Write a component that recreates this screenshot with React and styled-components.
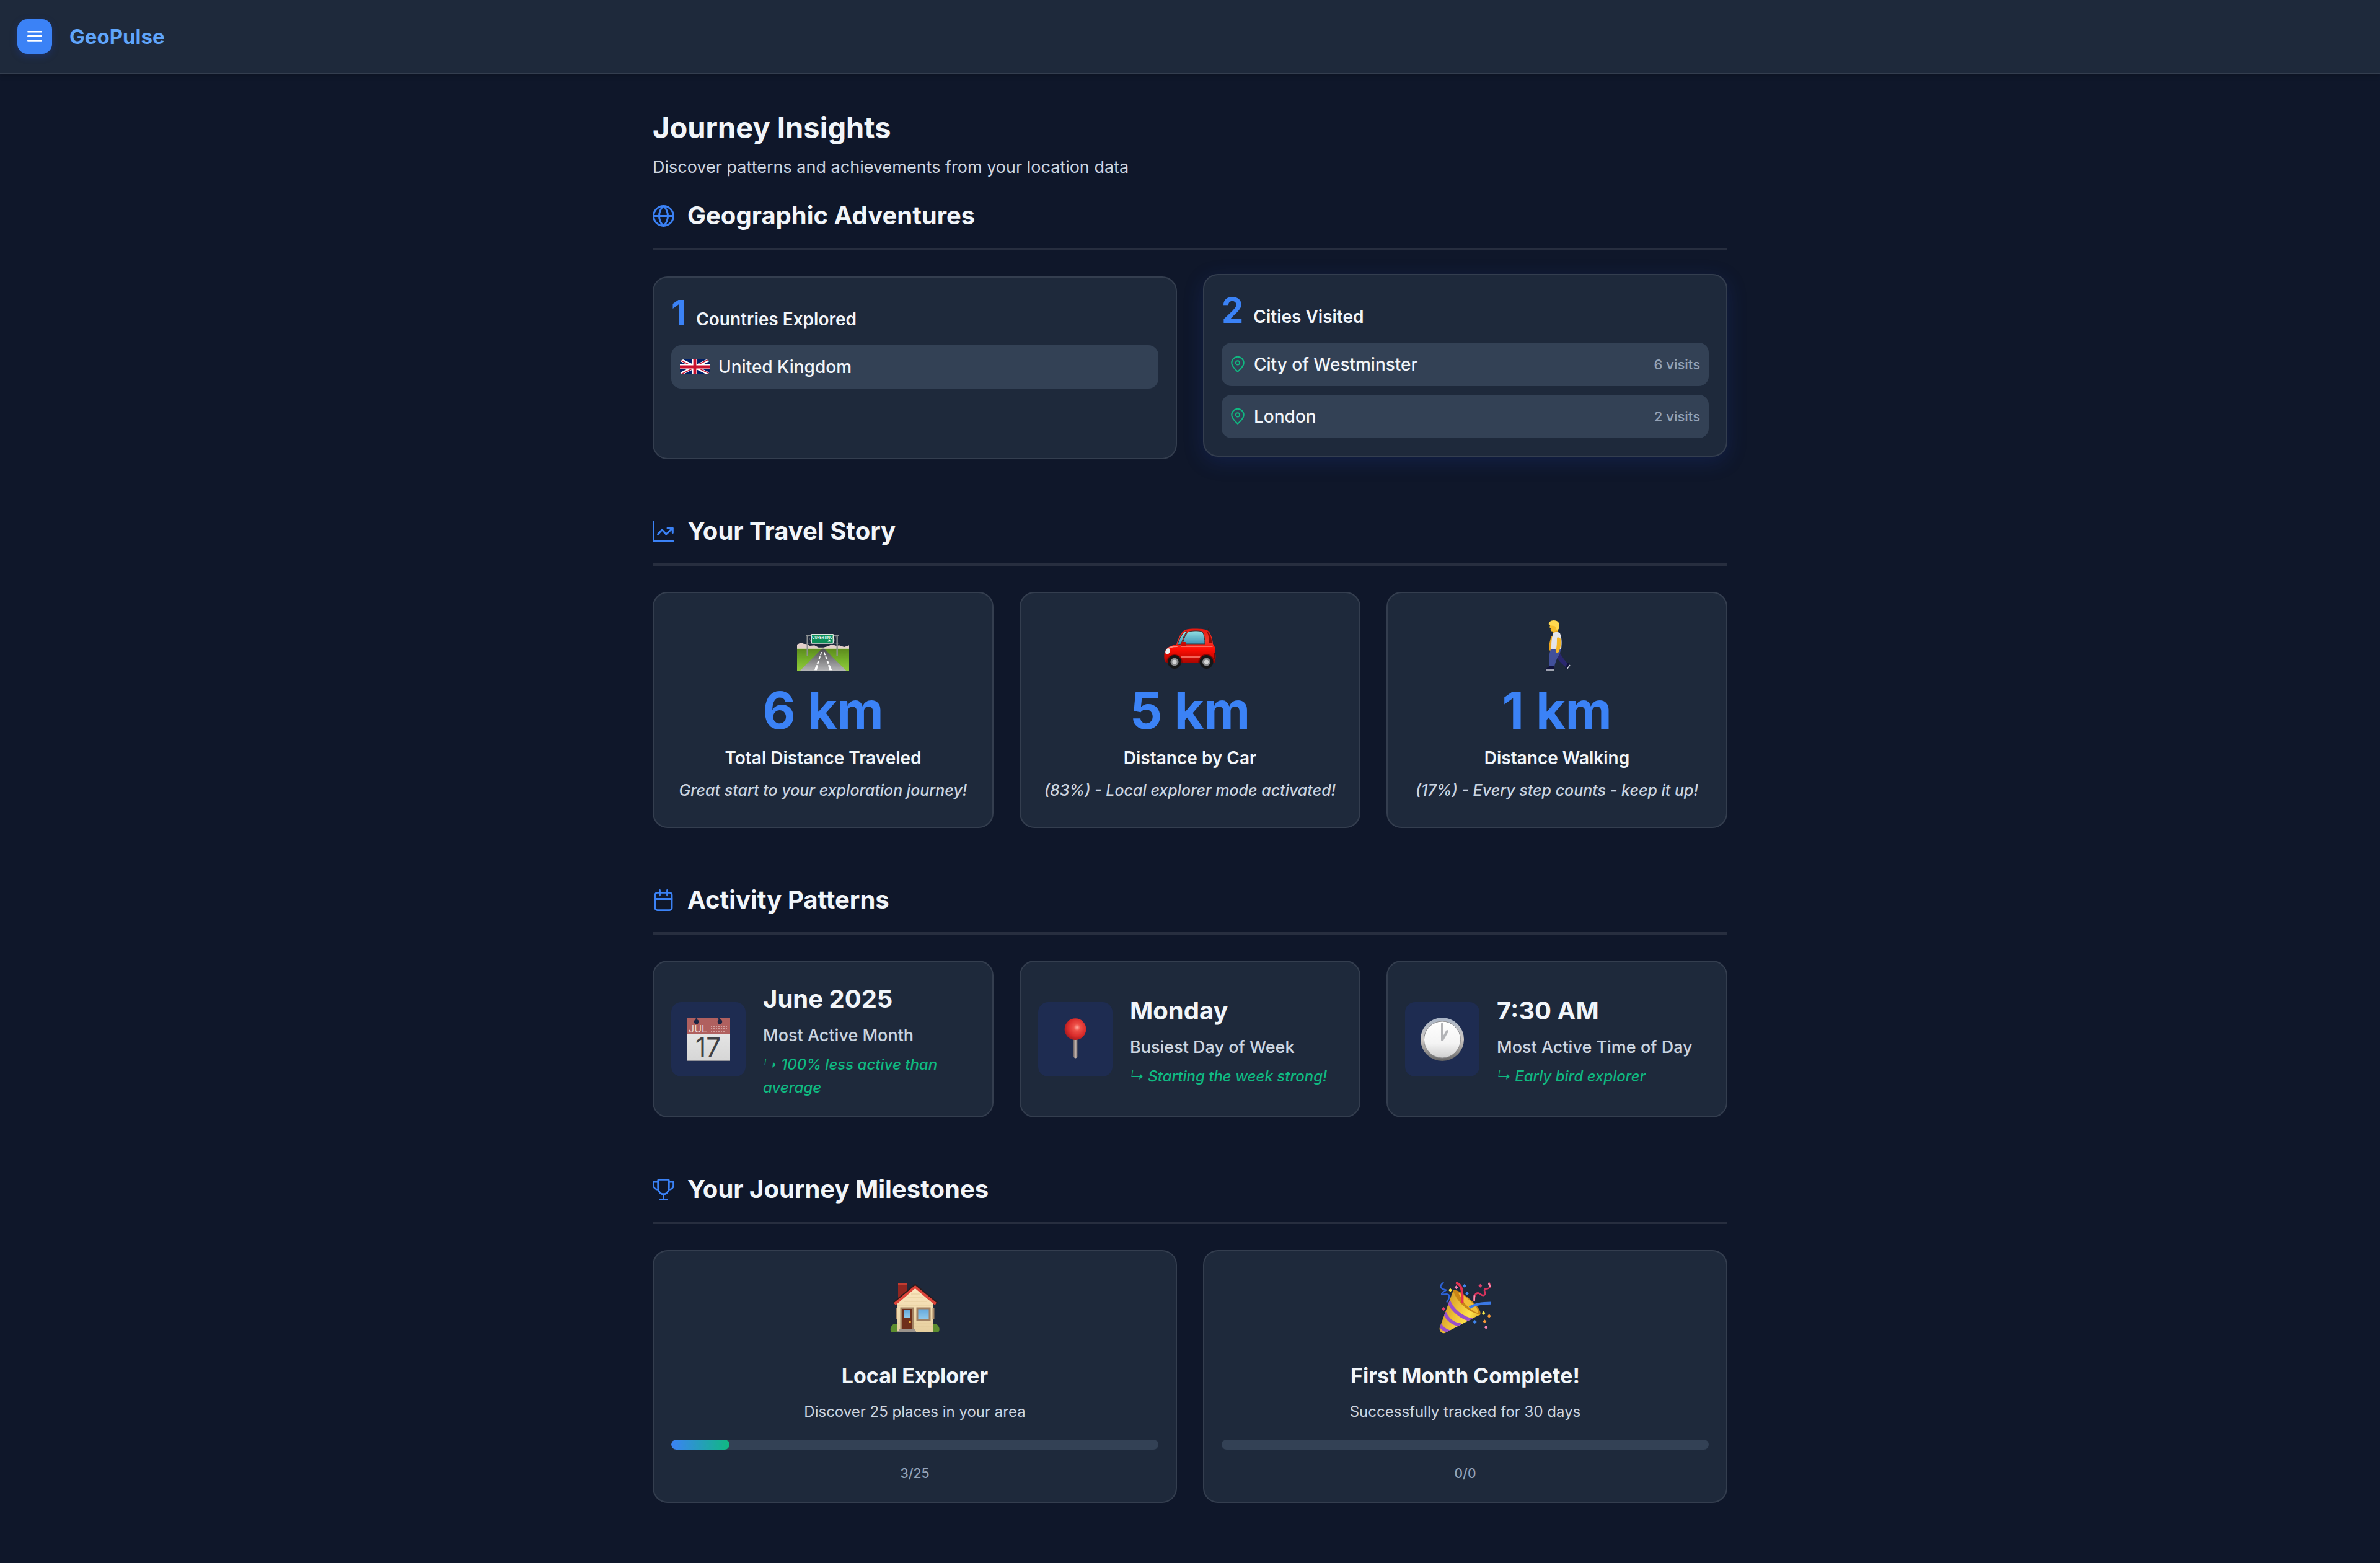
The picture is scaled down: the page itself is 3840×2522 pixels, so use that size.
import React from "react";
import styled, { createGlobalStyle, css } from "styled-components";

const color = {
  page: "#0f172a",
  surface: "#1e293b",
  row: "#334155",
  line: "rgba(255, 255, 255, 0.1)",
  text: "#f1f5f9",
  soft: "#cbd5e1",
  muted: "#94a3b8",
  blue: "#3b82f6",
  sky: "#60a5fa",
  green: "#10b981",
};

const GlobalStyle = createGlobalStyle`
  *, *::before, *::after { box-sizing: border-box; }
  body {
    margin: 0;
    background: ${color.page};
    color: ${color.text};
    font-family: Inter, "Liberation Sans", sans-serif;
    font-size: 28px;
    line-height: 42px;
  }
  h1, h2, h3, p, ul { margin: 0; padding: 0; }
`;

/* ---------- layout ---------- */

const Header = styled.header`
  display: flex;
  align-items: center;
  gap: 28px;
  padding: 31px 28px;
  background: ${color.surface};
  border-bottom: 2px solid ${color.line};
  box-shadow: 0 2px 8px rgba(0, 0, 0, 0.2);
`;

const MenuButton = styled.button`
  display: flex;
  align-items: center;
  justify-content: center;
  width: 56px;
  height: 56px;
  padding: 0;
  border: 0;
  border-radius: 16px;
  background: ${color.blue};
  color: #fff;
  box-shadow: 0 4px 12px rgba(30, 64, 175, 0.35);
  cursor: pointer;
`;

const Logo = styled.a`
  font-size: 33px;
  font-weight: 700;
  color: ${color.sky};
  text-decoration: none;
`;

const Main = styled.main`
  width: min(1734px, 100% - 56px);
  margin: 0 auto;
  padding: 56px 0 96px;
`;

const PageTitle = styled.h1`
  font-size: 47px;
  line-height: 60px;
  font-weight: 700;
`;

const PageSubtitle = styled.p`
  margin-top: 13px;
  font-size: 27px;
  color: ${color.soft};
`;

const Section = styled.section`
  margin-top: 90px;

  ${PageSubtitle} + & {
    margin-top: 31px;
  }
`;

const SectionHeader = styled.div`
  display: flex;
  align-items: center;
  gap: 21px;
  padding-bottom: 26px;
  margin-bottom: 42px;
  border-bottom: 4px solid ${color.line};
  color: ${color.blue};
`;

const SectionTitle = styled.h2`
  font-size: 40px;
  line-height: 52px;
  font-weight: 700;
  color: ${color.text};
`;

const Grid = styled.div`
  display: grid;
  grid-template-columns: repeat(${(p) => p.$columns}, minmax(0, 1fr));
  gap: 42px;

  @media (max-width: 1400px) {
    grid-template-columns: minmax(0, 1fr);
  }
`;

const Card = styled.article`
  padding: 28px;
  border: 2px solid ${color.line};
  border-radius: 24px;
  background: ${color.surface};

  ${(p) =>
    p.$raised &&
    css`
      transform: translateY(-4px);
      box-shadow: 0 8px 32px rgba(30, 64, 175, 0.22);
    `}
`;

/* ---------- geographic cards ---------- */

const CountRow = styled.div`
  display: flex;
  align-items: baseline;
  gap: 16px;
  margin-bottom: 21px;
`;

const Count = styled.span`
  font-size: 56px;
  line-height: 58px;
  font-weight: 700;
  color: ${color.blue};
`;

const CardLabel = styled.h3`
  font-size: 28px;
  line-height: 42px;
  font-weight: 600;
`;

const PlaceList = styled.ul`
  display: flex;
  flex-direction: column;
  gap: 14px;
  list-style: none;
`;

const Place = styled.li`
  display: flex;
  align-items: center;
  gap: 14px;
  padding: 14px;
  border-radius: 16px;
  background: ${color.row};
  color: ${color.green};
`;

const PlaceName = styled.span`
  flex: 1;
  font-weight: 500;
  color: ${color.text};
`;

const Visits = styled.span`
  font-size: 22px;
  font-weight: 500;
  color: ${color.muted};
`;

/* ---------- travel cards ---------- */

const TravelCard = styled(Card)`
  display: flex;
  flex-direction: column;
  align-items: center;
  padding: 42px 28px 40px;
  text-align: center;
`;

const Distance = styled.div`
  margin: 22px 0 14px;
  font-size: 82px;
  line-height: 84px;
  font-weight: 700;
  color: ${color.blue};
`;

const TravelLabel = styled(CardLabel)`
  line-height: 40px;
`;

const TravelNote = styled.p`
  margin-top: 14px;
  font-size: 25px;
  line-height: 37px;
  font-weight: 500;
  font-style: italic;
  color: ${color.soft};
`;

/* ---------- activity cards ---------- */

const ActivityCard = styled(Card)`
  display: flex;
  align-items: center;
  gap: 28px;
`;

const IconTile = styled.div`
  display: flex;
  flex: none;
  align-items: center;
  justify-content: center;
  width: 120px;
  height: 120px;
  border-radius: 16px;
  background: #1e2c51;
`;

const ActivityValue = styled.h3`
  font-size: 40px;
  line-height: 63px;
  font-weight: 700;
`;

const ActivityLabel = styled.p`
  margin: 7px 0;
  font-size: 27px;
  font-weight: 500;
  color: ${color.soft};
`;

const ActivityNote = styled.p`
  font-size: 24px;
  line-height: 37px;
  font-weight: 500;
  font-style: italic;
  color: ${color.green};
`;

const Arrow = styled.span`
  font-weight: 200;
`;

/* ---------- milestone cards ---------- */

const MilestoneCard = styled(Card)`
  text-align: center;
`;

const EmojiStage = styled.div`
  display: flex;
  align-items: center;
  justify-content: center;
  height: 126px;
`;

const MilestoneTitle = styled.h3`
  margin-top: 21px;
  font-size: 34px;
  line-height: 52px;
  font-weight: 700;
`;

const MilestoneText = styled.p`
  margin: 14px 0 27px;
  font-size: 24px;
  line-height: 36px;
  color: ${color.soft};
`;

const Track = styled.div`
  height: 16px;
  border-radius: 8px;
  background: ${color.row};
  overflow: hidden;
`;

const Fill = styled.div`
  height: 100%;
  border-radius: 8px;
  background: linear-gradient(90deg, ${color.blue}, ${color.green});
`;

const Progress = styled.p`
  margin-top: 21px;
  font-size: 21px;
  line-height: 35px;
  font-weight: 500;
  color: ${color.muted};
`;

/* ---------- line icons ---------- */

const LineSvg = styled.svg`
  display: block;
  flex: none;
  fill: none;
  stroke: currentColor;
  stroke-linecap: round;
  stroke-linejoin: round;
`;

const MenuIcon = () => (
  <LineSvg width="24" height="24" viewBox="0 0 24 24" strokeWidth="2.6" aria-hidden="true">
    <path d="M1.3 4.2h21.4M1.3 11.4h21.4M1.3 18.4h21.4" />
  </LineSvg>
);

const GlobeIcon = () => (
  <LineSvg width="35" height="35" viewBox="0 0 35 35" strokeWidth="3" aria-hidden="true">
    <circle cx="17.5" cy="17.5" r="16" />
    <path d="M1.5 17.5h32" />
    <path d="M17.5 1.5c-4.6 4.2-7 10-7 16s2.4 11.800 7 16c4.6-4.200 7-10 7-16s-2.400-11.800-7-16z" />
  </LineSvg>
);

const ChartIcon = () => (
  <LineSvg width="35" height="35" viewBox="0 0 35 35" strokeWidth="3" aria-hidden="true">
    <path d="M1.5 1.5v32h32" />
    <path d="M8.5 22l6.700-7.200 6.600 7.200 10-9.500" />
    <path d="M24 12h8.300v7.400" />
  </LineSvg>
);

const CalendarIcon = () => (
  <LineSvg width="35" height="35" viewBox="0 0 35 35" strokeWidth="2.8" aria-hidden="true">
    <rect x="4" y="5.4" width="27" height="28.2" rx="3.600" />
    <path d="M4 15.5h27M11.5 1.4v8.400M23.5 1.4v8.400" />
  </LineSvg>
);

const TrophyIcon = () => (
  <LineSvg width="35" height="35" viewBox="0 0 35 35" strokeWidth="2.8" aria-hidden="true">
    <path d="M8.700 3a1.700 1.700 0 0 1 1.700-1.600h14.200A1.700 1.700 0 0 1 26.300 3v11.500c0 6-4 10.500-8.800 10.500s-8.800-4.500-8.800-10.500z" />
    <path d="M8.700 5H3a1.700 1.700 0 0 0-1.600 1.700v3.800c0 4 3.200 7 8 7.200M26.300 5H32a1.700 1.700 0 0 1 1.600 1.700v3.800c0 4-3.200 7-8 7.200" />
    <path d="M17.500 25v8.500M11.500 33.500h12" />
  </LineSvg>
);

const PinIcon = () => (
  <LineSvg width="24" height="26" viewBox="0 0 24 26" strokeWidth="2" aria-hidden="true">
    <path d="M12 24.800C6 19.500 2.200 15.500 2.200 10.600a9.800 9.800 0 0 1 19.600 0c0 4.900-3.800 8.900-9.800 14.200z" />
    <circle cx="12" cy="10.400" r="3.200" />
  </LineSvg>
);

/* ---------- colour pictures ---------- */

const Picture = styled.svg`
  display: block;
  flex: none;
  overflow: visible;
`;

const Flag = styled.svg`
  display: block;
  flex: none;
  border-radius: 6px;
`;

const UkFlag = () => (
  <Flag width="48" height="24" viewBox="0 0 60 30" role="img" aria-label="Flag of the United Kingdom">
    <clipPath id="saltire">
      <path d="M30 15h30v15zv15H0zH0V0zV0h30z" />
    </clipPath>
    <path d="M0 0v30h60V0z" fill="#012169" />
    <path d="M0 0l60 30M60 0L0 30" stroke="#fff" strokeWidth="6" />
    <path d="M0 0l60 30M60 0L0 30" clipPath="url(#saltire)" stroke="#c8102e" strokeWidth="4" />
    <path d="M30 0v30M0 15h60" stroke="#fff" strokeWidth="10" />
    <path d="M30 0v30M0 15h60" stroke="#c8102e" strokeWidth="6" />
  </Flag>
);

const RoadPicture = () => (
  <Picture width="84" height="84" viewBox="18 -3 252 252" aria-hidden="true">
    <defs>
      <linearGradient id="grass" x1="0" y1="0" x2="0" y2="1">
        <stop offset="0" stopColor="#5c8a1c" />
        <stop offset="0.5" stopColor="#74b02a" />
        <stop offset="1" stopColor="#92cb3c" />
      </linearGradient>
      <linearGradient id="asphalt" x1="0" y1="0" x2="0" y2="1">
        <stop offset="0" stopColor="#4c4c4e" />
        <stop offset="1" stopColor="#b4b4b6" />
      </linearGradient>
    </defs>
    <path d="M18 140v-20l20-10 12 6 14 2 16 8 22-2 20 10h24l22-6 18-9 22 7 14-2 24 8 24-8v18z" fill="#e3cfca" />
    <path d="M18 136h252v6H18z" fill="#efe9d8" />
    <path d="M18 140h252v106H18z" fill="url(#grass)" />
    <path d="M138 140h11l107 106H33z" fill="url(#asphalt)" />
    <path d="M134 156h4l-3 16h-6zM126 178h6l-4 13h-7zM119 198h8l-5 14h-9zM110 220h10l-6 24h-12z" fill="#fff" />
    <path d="M147 156h4l6 16h-6zM154 178h6l5 13h-7zM160 198h8l6 14h-9zM168 220h9l10 24h-13z" fill="#fff" />
    <path d="M68 72v104M212 72v104" stroke="#8e9193" strokeWidth="7" />
    <path d="M60 76h26M195 76h27M60 113h26M195 113h27" stroke="#8d9193" strokeWidth="4" />
    <path d="M74 78l12 32M206 78l-10 32" stroke="#74797b" strokeWidth="2" />
    <rect x="86" y="69" width="109" height="47" rx="4" fill="#dfe8e2" />
    <rect x="90" y="73" width="101" height="39" rx="3" fill="#0d8f58" />
    <text x="140.5" y="92" textAnchor="middle" fontFamily="Inter, sans-serif" fontWeight="600" fontSize="17" fill="#fff">CUPERTINO</text>
    <path d="M168 107l7-8M168 97h9v9z" stroke="#fff" strokeWidth="3" fill="#fff" />
  </Picture>
);

const CarPicture = () => (
  <Picture width="84" height="84" viewBox="0 0 84 84" aria-hidden="true">
    <defs>
      <linearGradient id="carBody" x1="0" y1="0" x2="0" y2="1">
        <stop offset="0" stopColor="#e8170e" />
        <stop offset="0.35" stopColor="#f23a2c" />
        <stop offset="0.6" stopColor="#ff0d04" />
        <stop offset="1" stopColor="#a90500" />
      </linearGradient>
      <linearGradient id="carGlass" x1="0" y1="0" x2="0" y2="1">
        <stop offset="0" stopColor="#93e0e4" />
        <stop offset="1" stopColor="#3f93b4" />
      </linearGradient>
    </defs>
    <path d="M70 19l3-6" stroke="#222" strokeWidth="1" />
    <path d="M20 41C24 28 28 20 35 17c9-2 28-2 35 1 5 3 8 12 9 22 4 5 4 9 4 16 1 6 0 12-2 15H5c-4-2-5-6-4.500-12C0 49 7 43 20 41z" fill="url(#carBody)" />
    <path d="M22 41c3-10 7-17 12-21h3c-4 5-7 12-9 20z" fill="url(#carGlass)" stroke="#30363a" strokeWidth="1" />
    <path d="M30 40c2-9 5-16 10-20 7-1.500 16-1.500 22 0 3 6 4 12 4 20z" fill="url(#carGlass)" stroke="#30363a" strokeWidth="1" />
    <path d="M69 20c4 1 7 8 9 18l-5 1c0-8-1-14-4-19z" fill="#8e0c08" />
    <path d="M28 44h50M28 61h30" stroke="#ff8277" strokeWidth="1.500" strokeLinecap="round" />
    <path d="M4 50c3-4 9-6 17-6" stroke="#ff8a80" strokeWidth="2" fill="none" strokeLinecap="round" />
    <rect x="28" y="37" width="8" height="7" rx="2" fill="#c90a05" />
    <ellipse cx="6" cy="52" rx="3.500" ry="5" fill="#e9f1f2" transform="rotate(25 6 52)" />
    <path d="M82 55v10" stroke="#7e0502" strokeWidth="2" />
    <path d="M4 70a13 13 0 0 1 26 0zM55 70a13 13 0 0 1 27 0z" fill="#8d0502" />
    <circle cx="17" cy="69" r="11" fill="#151617" />
    <circle cx="17" cy="69" r="6.500" fill="#87898b" />
    <circle cx="17" cy="69" r="3.500" fill="#d2d4d5" />
    <circle cx="68.500" cy="69" r="11" fill="#151617" />
    <circle cx="68.500" cy="69" r="6.500" fill="#87898b" />
    <circle cx="68.500" cy="69" r="3.500" fill="#d2d4d5" />
  </Picture>
);

const WalkPicture = () => (
  <Picture width="84" height="84" viewBox="0 0 84 84" aria-hidden="true">
    <path d="M36 17h8v9h-8z" fill="#e8a41c" />
    <path d="M33 27c-2 7-4 14-4 22l3 3 3-3c0-8 2-12 3-18z" fill="#eda51a" />
    <path d="M43 46c3 9 8 15 13 22l4 5-4 4c-8-6-14-13-18-22z" fill="#2a276e" />
    <path d="M33 46h15c1 8-4 14-6 18-2 5-4 10-4 14h-8c-2-12-1-22 3-32z" fill="#41509a" />
    <path d="M30 76h7v5c-4 1.500-9 2-13.500 1.500 0-3 3-4 6.500-6z" fill="#10123a" />
    <path d="M24 82h13" stroke="#cdd0d8" strokeWidth="1.500" />
    <path d="M59 70l4 2c0 4-2 7-6 9-2 0-2-2 0-5z" fill="#10123a" />
    <path d="M63 74l-5 7" stroke="#cdd0d8" strokeWidth="1.500" />
    <path d="M36 23c3-3 8-3 11 0 3 7 3 15 2 25-5 1.500-11 1.500-16 0 0-9 0-17 3-25z" fill="#e4e4ea" />
    <path d="M42 30c3-1 5 0 6 2 1 8 0 15-3 21l-3 2-2-3c2-8 2-14 2-22z" fill="#f5b727" />
    <path d="M30 6c4-4 13-4 15 2 1 7-2 11-8 12-4 0-6-1-5-5l-2-2 1-3z" fill="#f7bf2e" />
    <path d="M29 9c-1-4 3-7 8-7 6 0 9 4 9 8s-1 7-4 9c-1-5-2-7-4-8-3 0-6-1-9-2z" fill="#ffd84f" />
  </Picture>
);

const CalendarPicture = () => (
  <Picture width="70" height="70" viewBox="0 0 70 70" aria-hidden="true">
    <defs>
      <linearGradient id="sheet" x1="0" y1="0" x2="0" y2="1">
        <stop offset="0" stopColor="#e4e4e4" />
        <stop offset="1" stopColor="#d6d6d6" />
      </linearGradient>
    </defs>
    <path d="M0 0h70v27H0z" fill="#b0605f" />
    <path d="M0 27h70v43H0z" fill="url(#sheet)" />
    <path d="M0 69h70" stroke="#8f9097" strokeWidth="2" />
    <path d="M15.600 0v5M51.500 0l1.500 5" stroke="#1e2c51" strokeWidth="2" />
    <circle cx="15.600" cy="6.800" r="3.700" fill="#1b2444" />
    <circle cx="53.500" cy="6.800" r="3.700" fill="#1b2444" />
    <text x="3" y="24" fontFamily="Inter, sans-serif" fontSize="16" fill="#eadada">JUL</text>
    <path d="M39 14h28M39 18h28M39 22h24" stroke="#d3a2a1" strokeWidth="2" strokeDasharray="2 2" />
    <text x="34.500" y="63" textAnchor="middle" fontFamily="Inter, sans-serif" fontSize="42" fontWeight="400" fill="#404145">17</text>
  </Picture>
);

const PushpinPicture = () => (
  <Picture width="70" height="70" viewBox="0 0 70 70" aria-hidden="true">
    <defs>
      <radialGradient id="pinBall" cx="0.58" cy="0.42" r="0.6">
        <stop offset="0" stopColor="#ffb0a4" />
        <stop offset="0.25" stopColor="#ee5048" />
        <stop offset="0.7" stopColor="#d92b2a" />
        <stop offset="1" stopColor="#a81c20" />
      </radialGradient>
      <linearGradient id="needle" x1="0" y1="0" x2="1" y2="0">
        <stop offset="0" stopColor="#675f62" />
        <stop offset="0.5" stopColor="#c3b5ae" />
        <stop offset="1" stopColor="#6d6465" />
      </linearGradient>
    </defs>
    <path d="M32 32h6.500v31q-3.200 5-6.500 0z" fill="url(#needle)" />
    <circle cx="35" cy="18.700" r="17.400" fill="url(#pinBall)" />
  </Picture>
);

const ClockPicture = () => (
  <Picture width="70" height="70" viewBox="0 0 70 70" aria-hidden="true">
    <defs>
      <linearGradient id="rim" x1="0" y1="0" x2="0" y2="1">
        <stop offset="0" stopColor="#a8b4c6" />
        <stop offset="0.5" stopColor="#cfcac6" />
        <stop offset="1" stopColor="#646464" />
      </linearGradient>
      <linearGradient id="dial" x1="0" y1="0" x2="0" y2="1">
        <stop offset="0" stopColor="#fff" />
        <stop offset="0.6" stopColor="#f4f4f4" />
        <stop offset="1" stopColor="#cfcfcf" />
      </linearGradient>
    </defs>
    <circle cx="35" cy="35" r="35" fill="url(#rim)" />
    <circle cx="35" cy="35.500" r="29.500" fill="url(#dial)" stroke="#8b8b8d" strokeWidth="1" />
    <path d="M35 36V10M35 36l8-14" stroke="#b3b4b7" strokeWidth="4" strokeLinecap="round" />
  </Picture>
);

const HousePicture = () => (
  <Picture width="84" height="84" viewBox="0 0 84 84" aria-hidden="true">
    <defs>
      <linearGradient id="wall" x1="0" y1="0" x2="0" y2="1">
        <stop offset="0" stopColor="#fbe7c0" />
        <stop offset="1" stopColor="#e6cf9f" />
      </linearGradient>
      <linearGradient id="pane" x1="0" y1="0" x2="0" y2="1">
        <stop offset="0" stopColor="#66a9dc" />
        <stop offset="1" stopColor="#8fc8ea" />
      </linearGradient>
    </defs>
    <path d="M15 3h14v17L15 26z" fill="#8f2620" />
    <path d="M15 3h14v3H15z" fill="#c23c31" />
    <path d="M42.600 9L71.300 35v46h-58V35z" fill="url(#wall)" />
    <path d="M36 20h14M30 26h26M24 32h38M14 38h57M14 67h57M40 73h31" stroke="#e3cb9b" strokeWidth="1" />
    <path d="M42.600 3.500L79 33l-4 4-32.400-28.500L11 37l-4-4z" fill="#2d1b1c" />
    <path d="M42.600 6L77 34l-2.500 4-32-27L11 38 8 34.500z" fill="#dd4439" />
    <path d="M11 42h3v19h-3zM70.500 42h3v19h-3z" fill="#a58565" />
    <path d="M18.500 41.500h21.500V77H18.500z" fill="#a38363" />
    <path d="M21 44h16.500v33H21z" fill="#6f2f1b" />
    <path d="M24 46h11v12H24z" fill="url(#pane)" />
    <circle cx="34" cy="65" r="1.800" fill="#f0b23c" />
    <path d="M16 77h26v3H16zM14 79.500h30V82H14z" fill="#9b938c" />
    <path d="M44.500 41.500h23v21.500h-23z" fill="#a08062" />
    <path d="M47.500 44.500h17V60h-17z" fill="url(#pane)" />
    <path d="M4 81c-3-5 0-9 3-12 3-2 6-1 6.500 1v11zM80.500 81c3-5 0-9-3-12-3-2-5.500-1-6 1v11z" fill="#5d8d2f" />
  </Picture>
);

const PartyPicture = () => (
  <Picture width="84" height="84" viewBox="18 21 252 252" aria-hidden="true">
    <defs>
      <linearGradient id="cone" x1="0" y1="0.3" x2="1" y2="0.8">
        <stop offset="0" stopColor="#c98f1f" />
        <stop offset="0.35" stopColor="#e9b934" />
        <stop offset="0.7" stopColor="#ffe14a" />
        <stop offset="1" stopColor="#d79a1d" />
      </linearGradient>
      <clipPath id="coneShape">
        <path d="M86 64C100 116 160 172 217 180L50 268c-12 8-32-2-30-22z" />
      </clipPath>
    </defs>
    <path d="M38 27c-20 14-16 30 12 34 6 2-20 10-20 20 0 8 30-8 36 6 3 8-2 20-10 32" stroke="#2d63d8" strokeWidth="7" fill="none" strokeLinecap="round" />
    <path d="M86 62c20-4 60 24 96 58 30 30 42 52 34 62-12 10-60-8-96-50C92 100 80 70 86 62z" fill="#c98516" />
    <path d="M110 74c22 8 50 30 74 56 18 20 26 34 22 42-20-4-46-24-68-50z" fill="#f1bd36" />
    <path d="M86 64C100 116 160 172 217 180L50 268c-12 8-32-2-30-22z" fill="url(#cone)" />
    <g clipPath="url(#coneShape)" fill="none" stroke="#9a4fc9" strokeWidth="17">
      <path d="M64 116c16 40 60 82 116 92" />
      <path d="M44 170c12 32 40 56 80 62" />
      <path d="M22 228c8 18 22 30 46 36" />
    </g>
    <path d="M104 29c22 8 28 30 26 92" stroke="#e5304f" strokeWidth="12" fill="none" strokeLinecap="round" />
    <path d="M165 147c24-16 52-22 105-22" stroke="#3b78e4" strokeWidth="13" fill="none" />
    <path d="M188 112c0-20 4-36 18-36 14 2 16 16 30 10 14-8-10-26 8-30 26-2 22-16 16-28" stroke="#d8335c" strokeWidth="8" fill="none" strokeLinecap="round" />
    <path d="M188 112v-22M259 32l5 12" stroke="#f78fb0" strokeWidth="8" strokeLinecap="round" />
    <path d="M141 32l9 9-9 9-9-9zM153 69l9 9-9 9-9-9zM191 207l9 9-9 9-9-9z" fill="#3f86ee" />
    <path d="M72 53l9 9-9 9-9-9zM233 164l9 9-9 9-9-9z" fill="#fff04a" />
    <path d="M101 40l9 9-9 9-9-9zM245 233l9 9-9 9-9-9z" fill="#f583b2" />
    <path d="M217 32l9 9-9 9-9-9zM40 144l9 9-9 9-9-9z" fill="#e0406a" />
    <path d="M260 178l9 10-9 9-9-9zM238 205l9 9-9 9-9-9z" fill="#f79a36" />
  </Picture>
);

/* ---------- data ---------- */

const cities = [
  { name: "City of Westminster", visits: 6 },
  { name: "London", visits: 2 },
];

const travel = [
  { picture: RoadPicture, value: "6 km", label: "Total Distance Traveled", note: "Great start to your exploration journey!" },
  { picture: CarPicture, value: "5 km", label: "Distance by Car", note: "(83%) - Local explorer mode activated!" },
  { picture: WalkPicture, value: "1 km", label: "Distance Walking", note: "(17%) - Every step counts - keep it up!" },
];

const activity = [
  { picture: CalendarPicture, value: "June 2025", label: "Most Active Month", note: "100% less active than average" },
  { picture: PushpinPicture, value: "Monday", label: "Busiest Day of Week", note: "Starting the week strong!" },
  { picture: ClockPicture, value: "7:30 AM", label: "Most Active Time of Day", note: "Early bird explorer" },
];

const milestones = [
  { picture: HousePicture, title: "Local Explorer", text: "Discover 25 places in your area", done: 3, total: 25 },
  { picture: PartyPicture, title: "First Month Complete!", text: "Successfully tracked for 30 days", done: 0, total: 0 },
];

function Group({ icon: Icon, title, columns, children }) {
  return (
    <Section>
      <SectionHeader>
        <Icon />
        <SectionTitle>{title}</SectionTitle>
      </SectionHeader>
      <Grid $columns={columns}>{children}</Grid>
    </Section>
  );
}

export default function App() {
  return (
    <>
      <GlobalStyle />
      <Header>
        <MenuButton type="button" aria-label="Open menu">
          <MenuIcon />
        </MenuButton>
        <Logo href="#">GeoPulse</Logo>
      </Header>
      <Main>
        <PageTitle>Journey Insights</PageTitle>
        <PageSubtitle>Discover patterns and achievements from your location data</PageSubtitle>

        <Group icon={GlobeIcon} title="Geographic Adventures" columns={2}>
          <Card>
            <CountRow>
              <Count>1</Count>
              <CardLabel>Countries Explored</CardLabel>
            </CountRow>
            <PlaceList>
              <Place>
                <UkFlag />
                <PlaceName>United Kingdom</PlaceName>
              </Place>
            </PlaceList>
          </Card>
          <Card $raised>
            <CountRow>
              <Count>2</Count>
              <CardLabel>Cities Visited</CardLabel>
            </CountRow>
            <PlaceList>
              {cities.map((city) => (
                <Place key={city.name}>
                  <PinIcon />
                  <PlaceName>{city.name}</PlaceName>
                  <Visits>{city.visits} visits</Visits>
                </Place>
              ))}
            </PlaceList>
          </Card>
        </Group>

        <Group icon={ChartIcon} title="Your Travel Story" columns={3}>
          {travel.map(({ picture: Art, value, label, note }) => (
            <TravelCard key={label}>
              <Art />
              <Distance>{value}</Distance>
              <TravelLabel>{label}</TravelLabel>
              <TravelNote>{note}</TravelNote>
            </TravelCard>
          ))}
        </Group>

        <Group icon={CalendarIcon} title="Activity Patterns" columns={3}>
          {activity.map(({ picture: Art, value, label, note }) => (
            <ActivityCard key={label}>
              <IconTile>
                <Art />
              </IconTile>
              <div>
                <ActivityValue>{value}</ActivityValue>
                <ActivityLabel>{label}</ActivityLabel>
                <ActivityNote>
                  <Arrow>↳</Arrow> {note}
                </ActivityNote>
              </div>
            </ActivityCard>
          ))}
        </Group>

        <Group icon={TrophyIcon} title="Your Journey Milestones" columns={2}>
          {milestones.map(({ picture: Art, title, text, done, total }) => (
            <MilestoneCard key={title}>
              <EmojiStage>
                <Art />
              </EmojiStage>
              <MilestoneTitle>{title}</MilestoneTitle>
              <MilestoneText>{text}</MilestoneText>
              <Track role="progressbar" aria-label={title} aria-valuemin={0} aria-valuemax={total} aria-valuenow={done}>
                <Fill style={{ width: total ? `${(done / total) * 100}%` : 0 }} />
              </Track>
              <Progress>
                {done}/{total}
              </Progress>
            </MilestoneCard>
          ))}
        </Group>
      </Main>
    </>
  );
}
